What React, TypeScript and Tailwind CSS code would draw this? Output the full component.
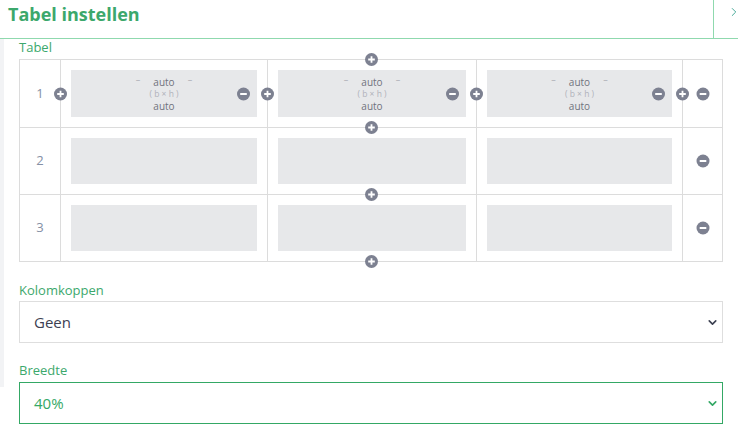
import { ChevronDown, ChevronRight } from "lucide-react"

const font = { fontFamily: "'Open Sans', 'Noto Sans', sans-serif" }

function Plus({ className = "" }: { className?: string }) {
    return (
        <span className={`absolute w-[13px] h-[13px] rounded-full bg-[#7d8191] flex items-center justify-center z-10 ${className}`}>
            <svg width="9" height="9" viewBox="0 0 9 9">
                <path d="M4.5 1.2v6.6M1.2 4.5h6.6" stroke="white" strokeWidth="1.8" />
            </svg>
        </span>
    )
}

function Minus({ className = "" }: { className?: string }) {
    return (
        <span className={`absolute w-[13px] h-[13px] rounded-full bg-[#7d8191] flex items-center justify-center z-10 ${className}`}>
            <svg width="9" height="9" viewBox="0 0 9 9">
                <path d="M1.2 4.5h6.6" stroke="white" strokeWidth="1.8" />
            </svg>
        </span>
    )
}

function Cell({ first, filled }: { first: boolean, filled: boolean }) {
    return (
        <div className="relative border-l border-[#dcdcdc] p-[10px] h-full">
            {first && <Plus className="left-[-7px] top-1/2 -translate-y-1/2" />}
            <div className="relative bg-[#e7e8ea] h-full flex flex-col items-center justify-center">
                {filled && (
                    <>
                        <div className="flex items-start gap-[13px] leading-[12px]">
                            <span className="text-[9px] text-[#a9abb2] -mt-[2px]">–</span>
                            <span className="text-[10px] text-[#70737d]">auto</span>
                            <span className="text-[9px] text-[#a9abb2] -mt-[2px]">–</span>
                        </div>
                        <span className="text-[8.5px] leading-[12px] text-[#b0b2ba]">( b × h )</span>
                        <span className="text-[10px] leading-[12px] text-[#70737d]">auto</span>
                        <Minus className="right-[7px] top-1/2 -translate-y-1/2" />
                    </>
                )}
            </div>
        </div>
    )
}

function Row({ n, h, last }: { n: number, h: string, last: boolean }) {
    const first = n === 1
    return (
        <div className={`grid grid-cols-[40px_207px_209px_206px_41px] ${h} ${last ? "" : "border-b border-[#dcdcdc]"}`}>
            <div className="flex items-center justify-center text-[13px] text-[#8590a5]">{n}</div>
            <Cell first={first} filled={first} />
            <Cell first={first} filled={first} />
            <Cell first={first} filled={first} />
            <div className="relative border-l border-[#dcdcdc] flex items-center justify-center">
                {first && <Plus className="left-[-7px] top-1/2 -translate-y-1/2" />}
                <Minus className="left-1/2 -translate-x-1/2 top-1/2 -translate-y-1/2" />
            </div>
        </div>
    )
}

function SelectBox({ value, active }: { value: string, active?: boolean }) {
    return (
        <div className={`h-[42px] border flex items-center justify-between pl-[14px] pr-[3px] ${active ? "border-[#34a865] text-[#34a865]" : "border-[#dedede] text-[#3d4152]"}`}>
            <span className="text-[15px]">{value}</span>
            <ChevronDown size={13} strokeWidth={3} />
        </div>
    )
}

export default function App() {
    return (
        <div className="w-[738px] h-[436px] bg-white overflow-hidden" style={font}>
            <div className="h-[39px] flex border-b border-[#8fd9ae]">
                <h1 className="flex-1 pl-[8px] pt-[1px] text-[18px] font-bold text-[#3ca86c] leading-[26px]">
                    Tabel instellen
                </h1>
                <div className="w-[25px] border-l border-[#8fd9ae] flex justify-end pt-[5px]">
                    <ChevronRight size={14} className="text-[#2f9e8a] -mr-[3px]" strokeWidth={1.5} />
                </div>
            </div>
            <div className="flex">
                <div className="w-[4px] h-[348px] bg-[#f2f3f5]"></div>
                <div className="flex-1 pl-[15px] pr-[15px]">
                    <p className="text-[13px] text-[#3ca86c] leading-[18px] mt-[-1px] mb-[3px]">Tabel</p>
                    <div className="relative w-[704px] border border-[#dcdcdc]">
                        <Row n={1} h="h-[68px]" last={false} />
                        <Row n={2} h="h-[67px]" last={false} />
                        <Row n={3} h="h-[66px]" last={true} />
                        <Plus className="left-[345px] top-[-7px]" />
                        <Plus className="left-[345px] top-[61px]" />
                        <Plus className="left-[345px] top-[128px]" />
                        <Plus className="left-[345px] top-[195px]" />
                    </div>
                    <p className="text-[13px] text-[#3ca86c] leading-[18px] mt-[19px] mb-[2px]">Kolomkoppen</p>
                    <div className="w-[704px]">
                        <SelectBox value="Geen" />
                    </div>
                    <p className="text-[13px] text-[#3ca86c] leading-[18px] mt-[18px] mb-[3px]">Breedte</p>
                    <div className="w-[704px]">
                        <SelectBox value="40%" active />
                    </div>
                </div>
            </div>
        </div>
    )
}
